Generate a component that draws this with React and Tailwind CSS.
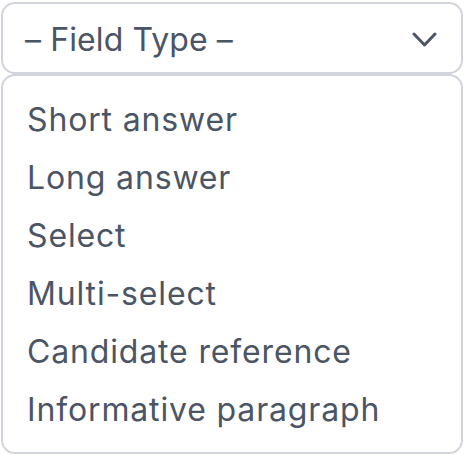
import React from 'react';

const OPTIONS = [
  'Short answer',
  'Long answer',
  'Select',
  'Multi-select',
  'Candidate reference',
  'Informative paragraph',
];

export default function App() {
  return (
    <div
      className="w-[464px] h-[456px] bg-white px-[1px] pt-[2px] text-[#4b5565]"
      style={{ fontFamily: 'Inter, "Noto Sans", sans-serif' }}
    >
      {/* select trigger */}
      <div className="flex h-[72px] items-center justify-between rounded-[14px] border-2 border-[#d1d5db] pl-[22px] pr-[24px] pt-[3px]">
        <span className="text-[32px] leading-none tracking-[0.1px]">– Field Type –</span>
        <svg width="25" height="16" viewBox="0 0 25 16" fill="none">
          <path d="M2 2l10.5 11L23 2" stroke="#4b5565" strokeWidth="3" strokeLinecap="round" strokeLinejoin="round" />
        </svg>
      </div>

      {/* options list */}
      <div className="rounded-[14px] border-2 border-[#d1d5db] py-[14px] tracking-[0.85px]">
        {OPTIONS.map((o) => (
          <div key={o} className="flex h-[58px] items-center px-[24px] pt-[2px] text-[32px] leading-none">
            {o}
          </div>
        ))}
      </div>
    </div>
  );
}
